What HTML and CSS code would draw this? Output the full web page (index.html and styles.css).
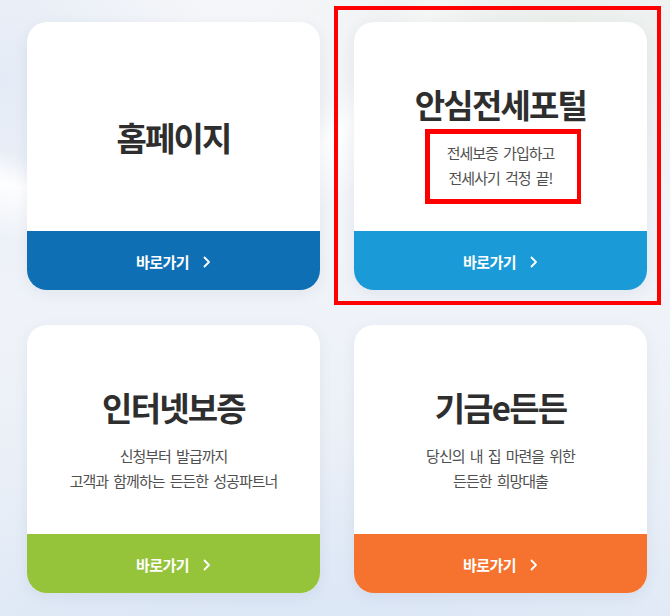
FILE: index.html
```html
<!DOCTYPE html>
<html lang="ko">
<head>
<meta charset="utf-8">
<title>바로가기</title>
<link rel="stylesheet" href="styles.css">
</head>
<body>
<main class="page">
  <div class="grid">
    <a class="card" href="#">
      <div class="card-body">
        <h2 class="card-title">홈페이지</h2>
      </div>
      <div class="card-btn btn-navy"><span>바로가기</span><svg class="chev" viewBox="0 0 8 12" width="8" height="12"><path d="M1.5 1.5 L6 6 L1.5 10.5" fill="none" stroke="#fff" stroke-width="1.8" stroke-linecap="round" stroke-linejoin="round"/></svg></div>
    </a>
    <a class="card" href="#">
      <div class="card-body">
        <h2 class="card-title">안심전세포털</h2>
        <p class="card-desc">전세보증 가입하고<br>전세사기 걱정 끝!</p>
      </div>
      <div class="card-btn btn-sky"><span>바로가기</span><svg class="chev" viewBox="0 0 8 12" width="8" height="12"><path d="M1.5 1.5 L6 6 L1.5 10.5" fill="none" stroke="#fff" stroke-width="1.8" stroke-linecap="round" stroke-linejoin="round"/></svg></div>
    </a>
    <a class="card" href="#">
      <div class="card-body">
        <h2 class="card-title">인터넷보증</h2>
        <p class="card-desc">신청부터 발급까지<br>고객과 함께하는 든든한 성공파트너</p>
      </div>
      <div class="card-btn btn-green"><span>바로가기</span><svg class="chev" viewBox="0 0 8 12" width="8" height="12"><path d="M1.5 1.5 L6 6 L1.5 10.5" fill="none" stroke="#fff" stroke-width="1.8" stroke-linecap="round" stroke-linejoin="round"/></svg></div>
    </a>
    <a class="card" href="#">
      <div class="card-body">
        <h2 class="card-title">기금e든든</h2>
        <p class="card-desc">당신의 내 집 마련을 위한<br>든든한 희망대출</p>
      </div>
      <div class="card-btn btn-orange"><span>바로가기</span><svg class="chev" viewBox="0 0 8 12" width="8" height="12"><path d="M1.5 1.5 L6 6 L1.5 10.5" fill="none" stroke="#fff" stroke-width="1.8" stroke-linecap="round" stroke-linejoin="round"/></svg></div>
    </a>
  </div>
  <div class="mark mark-card"></div>
  <div class="mark mark-desc"></div>
</main>
</body>
</html>
```
FILE: styles.css
```css
* { box-sizing: border-box; }
html, body { margin: 0; padding: 0; }
body {
  width: 670px;
  height: 616px;
  overflow: hidden;
  font-family: "Noto Sans CJK KR", "Noto Sans", sans-serif;
  background:
    radial-gradient(ellipse 420px 260px at 560px 40px, rgba(233,238,233,0.9), rgba(233,238,233,0) 70%),
    radial-gradient(ellipse 520px 420px at 120px -60px, rgba(255,255,255,0) 55%, rgba(255,255,255,0.95) 62%, rgba(255,255,255,0) 75%),
    radial-gradient(ellipse 300px 320px at 0px 80px, rgba(228,235,246,1), rgba(228,235,246,0) 70%),
    radial-gradient(ellipse 700px 300px at 300px 660px, rgba(218,230,246,1), rgba(218,230,246,0) 70%),
    linear-gradient(180deg, #f5f6f9 0%, #eef2f8 60%, #e3ebf6 100%);
}
.page {
  position: relative;
  width: 670px;
  height: 616px;
  padding: 22px 0 0 27px;
}
.grid {
  display: grid;
  grid-template-columns: 293px 293px;
  grid-auto-rows: 268px;
  column-gap: 34px;
  row-gap: 35px;
}
.card {
  display: flex;
  flex-direction: column;
  background: #fff;
  border-radius: 20px;
  overflow: hidden;
  text-decoration: none;
  box-shadow: 0 4px 14px rgba(60, 80, 110, 0.08);
}
.card-body {
  flex: 1;
  display: flex;
  flex-direction: column;
  align-items: center;
  justify-content: center;
  padding-top: 20px;
  text-align: center;
}
.card-title {
  margin: 0;
  font-size: 33px;
  line-height: 40px;
  font-weight: 700;
  color: #2e2e2e;
  letter-spacing: -1.8px;
}
.card-desc {
  margin: 16px 0 0;
  font-size: 15px;
  line-height: 25px;
  font-weight: 400;
  color: #505050;
  letter-spacing: -1px;
  word-spacing: 2px;
}
.card-btn {
  height: 59px;
  display: flex;
  align-items: center;
  justify-content: center;
  gap: 14px;
  color: #fff;
  font-size: 15px;
  font-weight: 700;
  letter-spacing: -0.5px;
}
.card-btn span { line-height: 20px; padding-top: 2px; }
.chev { display: block; margin-top: 2px; }
.btn-navy { background: #0f6fb5; }
.btn-sky { background: #1a9bd7; }
.btn-green { background: #95c33a; }
.btn-orange { background: #f5732e; }
.mark {
  position: absolute;
  border: 4px solid #ff0000;
  pointer-events: none;
}
.mark-card { left: 334px; top: 6px; width: 327px; height: 299px; }
.mark-desc { left: 425px; top: 129px; width: 156px; height: 75px; border-width: 5px 4px 5px 5px; }
```
